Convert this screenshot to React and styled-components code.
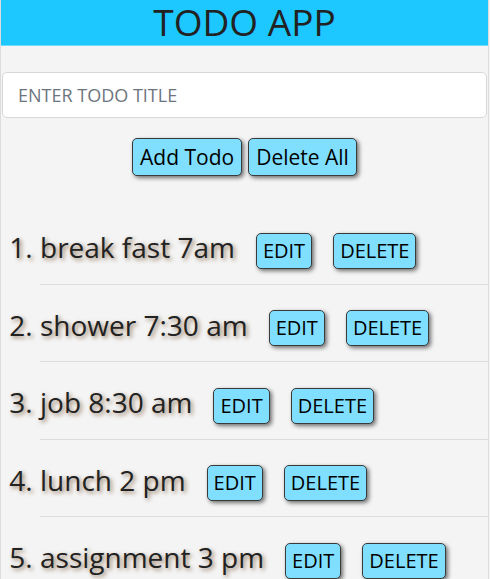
import styled, { createGlobalStyle } from 'styled-components';

const GlobalStyle = createGlobalStyle`
  * {
    box-sizing: border-box;
  }

  body {
    margin: 0;
    background: #f4f4f4;
    font-family: 'Open Sans', 'Noto Sans', sans-serif;
    color: #222;
  }
`;

const Page = styled.div`
  width: 489px;
  min-height: 579px;
  border-left: 1px solid #dcdcdc;
  border-right: 1px solid #dcdcdc;
  background: #f4f4f4;
  overflow: hidden;
`;

const Header = styled.h1`
  margin: 0;
  height: 46px;
  background: #1cc8ff;
  border-bottom: 1px solid #6fdcff;
  color: #222;
  font-size: 37px;
  font-weight: 400;
  line-height: 44px;
  text-align: center;
`;

const TitleInput = styled.input`
  display: block;
  width: calc(100% - 2px);
  height: 46px;
  margin: 26px 1px 0;
  padding: 0 15px;
  border: 1px solid #d8d8d8;
  border-radius: 5px;
  background: white;
  font-family: inherit;
  font-size: 18px;
  color: #333;

  &::placeholder {
    color: #6c757d;
  }
`;

const Actions = styled.div`
  display: flex;
  justify-content: center;
  gap: 6px;
  margin-top: 20px;
`;

const Button = styled.button`
  height: ${({ $small }) => ($small ? '36px' : '38px')};
  padding: ${({ $small }) => ($small ? '0 6px' : '0 7px')};
  border: 1px solid #3a3a3a;
  border-radius: 5px;
  background: #80dfff;
  box-shadow: 2px 2px 4px rgba(0, 0, 0, 0.55);
  color: #000;
  font-family: inherit;
  font-size: ${({ $small }) => ($small ? '20px' : '21px')};
  line-height: 1;
  vertical-align: middle;
  cursor: pointer;
`;

const List = styled.ol`
  margin: 31px 0 0;
  padding-left: 39px;
`;

const Item = styled.li`
  padding: 21px 0 15px;
  border-bottom: 1px solid #dcdcdc;
  font-size: 28px;
  line-height: 38px;
  text-shadow: 2px 2px 4px rgba(90, 50, 10, 0.6);

  ${Button} {
    margin-left: 21px;
    text-shadow: none;
  }
`;

const todos = [
  'break fast 7am',
  'shower 7:30 am',
  'job 8:30 am',
  'lunch 2 pm',
  'assignment 3 pm',
];

const App = () => {
  return (
    <Page>
      <GlobalStyle />
      <Header>TODO APP</Header>
      <TitleInput type="text" placeholder="ENTER TODO TITLE" />
      <Actions>
        <Button type="button">Add Todo</Button>
        <Button type="button">Delete All</Button>
      </Actions>
      <List>
        {todos.map((todo) => (
          <Item key={todo}>
            {todo}
            <Button type="button" $small>
              EDIT
            </Button>
            <Button type="button" $small>
              DELETE
            </Button>
          </Item>
        ))}
      </List>
    </Page>
  );
};

export default App;
